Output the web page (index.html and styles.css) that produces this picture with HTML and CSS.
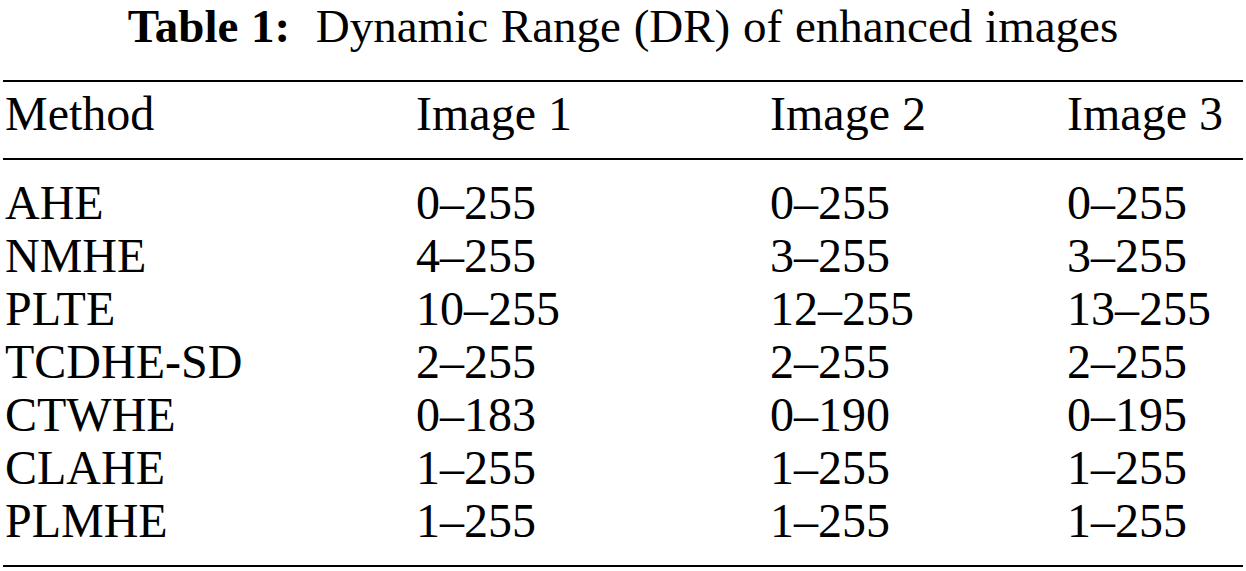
FILE: index.html
```html
<!DOCTYPE html>
<html lang="en">
<head>
  <meta charset="UTF-8" />
  <title>Table 1: Dynamic Range (DR) of enhanced images</title>
  <link rel="stylesheet" href="styles.css">
</head>
<body>
  <div class="sheet">
    <h1 class="caption"><b>Table 1:</b>&nbsp; Dynamic Range (DR) of enhanced images</h1>
    <div class="dr-table">
      <div class="row head">
        <span>Method</span><span>Image 1</span><span>Image 2</span><span>Image 3</span>
      </div>
      <div class="body">
        <div class="row"><span>AHE</span><span>0–255</span><span>0–255</span><span>0–255</span></div>
        <div class="row"><span>NMHE</span><span>4–255</span><span>3–255</span><span>3–255</span></div>
        <div class="row"><span>PLTE</span><span>10–255</span><span>12–255</span><span>13–255</span></div>
        <div class="row"><span>TCDHE-SD</span><span>2–255</span><span>2–255</span><span>2–255</span></div>
        <div class="row"><span>CTWHE</span><span>0–183</span><span>0–190</span><span>0–195</span></div>
        <div class="row"><span>CLAHE</span><span>1–255</span><span>1–255</span><span>1–255</span></div>
        <div class="row"><span>PLMHE</span><span>1–255</span><span>1–255</span><span>1–255</span></div>
      </div>
    </div>
  </div>
</body>
</html>
```
FILE: styles.css
```css
* {
  margin: 0;
  padding: 0;
  box-sizing: border-box;
}
body {
  background: #fff;
  color: #000;
  font-family: 'Liberation Serif', 'Times New Roman', serif;
  font-size: 48px;
}
.sheet {
  width: 1246px;
  padding: 0 3px;
}
.caption {
  font-size: 47px;
  font-weight: 400;
  line-height: 52px;
  word-spacing: 1px;
  text-align: center;
  margin-bottom: 28px;
}
.caption b {
  font-weight: 700;
}
.dr-table {
  border-top: 2px solid #000;
  border-bottom: 2px solid #000;
}
.row {
  display: grid;
  grid-template-columns: 411px 354px 297px 1fr;
  padding-left: 2px;
  line-height: 53px;
  white-space: nowrap;
}
.head {
  padding-top: 5px;
  padding-bottom: 18px;
  border-bottom: 2px solid #000;
}
.body {
  padding-top: 16px;
  padding-bottom: 18px;
}
```
